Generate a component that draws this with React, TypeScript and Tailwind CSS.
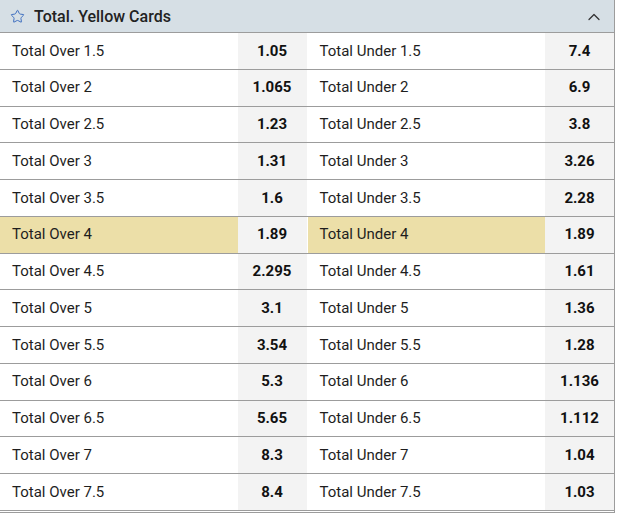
import { ChevronUp, Star } from "lucide-react";

const rows = [
  ["1.5", "1.05", "7.4"],
  ["2", "1.065", "6.9"],
  ["2.5", "1.23", "3.8"],
  ["3", "1.31", "3.26"],
  ["3.5", "1.6", "2.28"],
  ["4", "1.89", "1.89"],
  ["4.5", "2.295", "1.61"],
  ["5", "3.1", "1.36"],
  ["5.5", "3.54", "1.28"],
  ["6", "5.3", "1.136"],
  ["6.5", "5.65", "1.112"],
  ["7", "8.3", "1.04"],
  ["7.5", "8.4", "1.03"],
];

function Cell({ label, odd, active }: { label: string; odd: string; active: boolean }) {
  return (
    <div className="flex">
      <div className={`flex-1 flex items-center pl-3 text-[15px] text-[#1e1e1e] ${active ? "bg-[#ecdfa8]" : "bg-white"}`}>
        {label}
      </div>
      <div className="w-[69px] flex items-center justify-center bg-[#f3f3f3] text-[15px] font-bold text-[#111]">
        {odd}
      </div>
    </div>
  );
}

export default function App() {
  return (
    <div className="w-[615px] bg-white" style={{ fontFamily: "Roboto, 'Noto Sans', sans-serif" }}>
      <div className="border-r border-b border-[#9c9c9c] pb-px">
        {/* Header */}
        <div className="h-[33px] flex items-center bg-[#d6dfe5] border-b border-[#9c9c9c] pl-[10px] pr-[10px] pt-px">
          <Star size={15} strokeWidth={1.6} className="text-[#3f6fc0]" />
          <span className="ml-[9px] text-[16px] font-medium text-[#222]">Total. Yellow Cards</span>
          <ChevronUp size={20} strokeWidth={1.5} className="ml-auto text-[#333]" />
        </div>
        {/* Rows */}
        {rows.map(([line, over, under]) => {
          const active = line === "4";
          return (
            <div key={line} className="h-[36.75px] grid grid-cols-2 gap-px border-b border-[#9c9c9c] bg-white">
              <Cell label={`Total Over ${line}`} odd={over} active={active} />
              <Cell label={`Total Under ${line}`} odd={under} active={active} />
            </div>
          );
        })}
      </div>
    </div>
  );
}
